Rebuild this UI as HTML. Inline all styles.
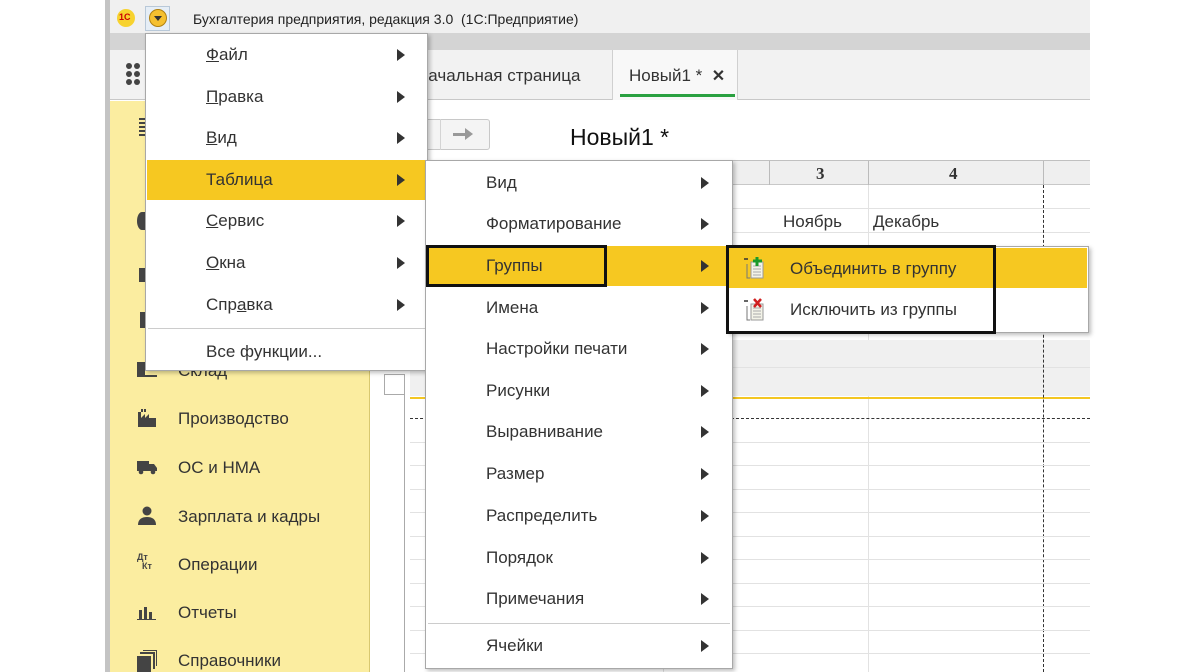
<!DOCTYPE html>
<html><head><meta charset="utf-8"><style>
*{margin:0;padding:0;box-sizing:border-box}
body{width:1200px;height:672px;overflow:hidden;background:#fff;position:relative;font-family:"Liberation Sans",Arial,sans-serif;color:#333}
.a{position:absolute}
.t{position:absolute;font-size:17px;white-space:nowrap;line-height:20px}
.arr{position:absolute;width:0;height:0;border-top:6px solid transparent;border-bottom:6px solid transparent;border-left:8px solid #333}
.hl{position:absolute;background:#f6c821}
.gl{position:absolute;background:#e2e2e2}
</style></head><body>
<!-- app frame -->
<div class="a" style="left:105px;top:0;width:5px;height:672px;background:#c4c4c4"></div>
<div class="a" style="left:110px;top:0;width:980px;height:33px;background:#f0f0f0"></div>
<div class="a" style="left:110px;top:33px;width:980px;height:17px;background:#d4d4d4"></div>
<div class="a" style="left:110px;top:50px;width:980px;height:50px;background:#f2f2f2;border-bottom:1px solid #c8c8c8"></div>
<!-- title bar -->
<div class="a" style="left:117px;top:9px;width:18px;height:18px;border-radius:50%;background:#f7d22e"></div>
<div class="a" style="left:119px;top:12px;font-size:9px;font-weight:bold;color:#c00">1С</div>
<div class="a" style="left:145px;top:6px;width:25px;height:25px;border:1px solid #b8c8d8;background:#e6eef6"></div>
<div class="a" style="left:149px;top:9px;width:18px;height:18px;border-radius:50%;background:#f5c030;border:1px solid #b08010"></div>
<div class="a" style="left:154px;top:16px;border-left:4px solid transparent;border-right:4px solid transparent;border-top:5px solid #333"></div>
<div class="t" style="left:193px;top:9px;font-size:14px;color:#222">Бухгалтерия предприятия, редакция 3.0&nbsp; (1С:Предприятие)</div>
<!-- grid icon -->
<svg class="a" style="left:125px;top:62px" width="22" height="24"><g fill="#444"><circle cx="4" cy="4" r="3"/><circle cx="12" cy="4" r="3"/><circle cx="4" cy="12" r="3"/><circle cx="12" cy="12" r="3"/><circle cx="4" cy="20" r="3"/><circle cx="12" cy="20" r="3"/></g></svg>
<!-- tabs -->
<div class="t" style="left:416px;top:66px;font-size:17px">Начальная страница</div>
<div class="a" style="left:612px;top:50px;width:126px;height:50px;background:#f8f8f8;border-left:1px solid #d0d0d0;border-right:1px solid #d0d0d0"></div>
<div class="t" style="left:629px;top:66px">Новый1 *&nbsp; <b style="font-size:16px">✕</b></div>
<div class="a" style="left:620px;top:94px;width:115px;height:3px;background:#2aa040"></div>
<!-- sidebar -->
<div class="a" style="left:110px;top:101px;width:260px;height:571px;background:#fbeda0;border-right:1px solid #d8c870"></div>
<div class="a" style="left:139px;top:118px;width:6px;height:18px;background:repeating-linear-gradient(#444 0 2px,transparent 2px 4px)"></div>
<div class="a" style="left:137px;top:212px;width:10px;height:18px;border-radius:50% 0 0 50%;background:#444"></div>
<div class="a" style="left:139px;top:268px;width:6px;height:14px;background:#444"></div>
<div class="a" style="left:140px;top:312px;width:6px;height:16px;background:#444"></div>
<div class="a" style="left:137px;top:362px;width:8px;height:14px;background:#444"></div>
<div class="a" style="left:137px;top:375px;width:20px;height:2px;background:#444"></div>
<svg class="a" style="left:137px;top:408px" width="20" height="20"><path d="M1 19V4h3v6l4-4v4l4-4v4h7v9z M4 1h2v3H4z M7 1h2v3H7z" fill="#444"/></svg>
<svg class="a" style="left:136px;top:458px" width="22" height="18"><path d="M1 3h12v10H1z M13 6h5l3 4v3h-8z" fill="#444"/><circle cx="5" cy="14" r="2.3" fill="#444"/><circle cx="17" cy="14" r="2.3" fill="#444"/></svg>
<svg class="a" style="left:138px;top:506px" width="18" height="20"><circle cx="9" cy="5" r="4.5" fill="#444"/><path d="M0 19c0-6 4-8 9-8s9 2 9 8z" fill="#444"/></svg>
<div class="a" style="left:137px;top:553px;font-size:9px;font-weight:bold;color:#444;line-height:9px">Дт<br>&nbsp;&nbsp;Кт</div>
<svg class="a" style="left:137px;top:604px" width="20" height="16"><path d="M2 6h3v9H2z M7 3h3v12H7z M12 8h3v7h-3z M0 15h19v1H0z" fill="#444"/></svg>
<svg class="a" style="left:137px;top:650px" width="20" height="22"><path d="M0 6h14v16H0z" fill="#444"/><path d="M3 3h14v16 M6 0h14v16" stroke="#444" stroke-width="2" fill="none"/></svg>
<div class="t" style="left:178px;top:409px">Производство</div>
<div class="t" style="left:178px;top:458px">ОС и НМА</div>
<div class="t" style="left:178px;top:507px">Зарплата и кадры</div>
<div class="t" style="left:178px;top:555px">Операции</div>
<div class="t" style="left:178px;top:603px">Отчеты</div>
<div class="t" style="left:178px;top:651px">Справочники</div>
<div class="t" style="left:178px;top:361px">Склад</div>
<!-- main content -->
<div class="a" style="left:420px;top:119px;width:70px;height:31px;border:1px solid #c8c8c8;border-radius:3px;background:#f4f4f4"></div>
<div class="a" style="left:440px;top:119px;width:1px;height:31px;background:#d4d4d4"></div>
<div class="a" style="left:453px;top:133px;width:14px;height:3px;background:#999"></div>
<div class="a" style="left:465px;top:128px;border-top:6px solid transparent;border-bottom:6px solid transparent;border-left:8px solid #999"></div>
<div class="t" style="left:570px;top:124px;font-size:23px;line-height:26px;color:#111">Новый1 *</div>
<!-- spreadsheet -->
<div class="a" style="left:410px;top:160px;width:680px;height:1px;background:#c0c0c0"></div>
<div class="a" style="left:410px;top:161px;width:680px;height:24px;background:#efefef;border-bottom:1px solid #c8c8c8"></div>
<div class="a" style="left:769px;top:161px;width:1px;height:24px;background:#bbb"></div>
<div class="a" style="left:868px;top:161px;width:1px;height:24px;background:#bbb"></div>
<div class="a" style="left:1043px;top:161px;width:1px;height:24px;background:#bbb"></div>
<div class="t" style="left:816px;top:164px;font-family:'Liberation Serif',serif;font-weight:bold;font-size:17px">3</div>
<div class="t" style="left:949px;top:164px;font-family:'Liberation Serif',serif;font-weight:bold;font-size:17px">4</div>
<div class="gl" style="left:868px;top:185px;width:1px;height:487px"></div>
<div class="gl" style="left:663px;top:185px;width:1px;height:487px"></div>
<div class="gl" style="left:410px;top:208px;width:680px;height:1px"></div>
<div class="gl" style="left:410px;top:232px;width:680px;height:1px"></div>
<div class="t" style="left:783px;top:212px">Ноябрь</div>
<div class="t" style="left:873px;top:212px">Декабрь</div>
<div class="a" style="left:410px;top:340px;width:680px;height:56px;background:#f0f0f0"></div>
<div class="gl" style="left:410px;top:367px;width:680px;height:1px"></div>
<div class="a" style="left:384px;top:374px;width:21px;height:21px;border:1px solid #aaa;border-right:none"></div>
<div class="a" style="left:404px;top:374px;width:1px;height:298px;background:#aaa"></div>
<div class="a" style="left:410px;top:397px;width:680px;height:2px;background:#f3c622"></div>
<div class="a" style="left:410px;top:418px;width:680px;height:0;border-top:1.5px dashed #333"></div>
<div class="a" style="left:1043px;top:185px;width:0;height:487px;border-left:1.5px dashed #333"></div>
<div class="gl" style="left:410px;top:442px;width:680px;height:1px"></div>
<div class="gl" style="left:410px;top:465px;width:680px;height:1px"></div>
<div class="gl" style="left:410px;top:489px;width:680px;height:1px"></div>
<div class="gl" style="left:410px;top:512px;width:680px;height:1px"></div>
<div class="gl" style="left:410px;top:536px;width:680px;height:1px"></div>
<div class="gl" style="left:410px;top:559px;width:680px;height:1px"></div>
<div class="gl" style="left:410px;top:583px;width:680px;height:1px"></div>
<div class="gl" style="left:410px;top:606px;width:680px;height:1px"></div>
<div class="gl" style="left:410px;top:630px;width:680px;height:1px"></div>
<div class="gl" style="left:410px;top:653px;width:680px;height:1px"></div>
<!-- menu 1 -->
<div class="a" style="left:145px;top:33px;width:283px;height:338px;background:#fff;border:1px solid #a8a8a8;box-shadow:2px 2px 4px rgba(0,0,0,.25)"></div>
<div class="hl" style="left:147px;top:160px;width:279px;height:40px"></div>
<div class="t" style="left:206px;top:45px"><u>Ф</u>айл</div>
<div class="t" style="left:206px;top:87px"><u>П</u>равка</div>
<div class="t" style="left:206px;top:128px"><u>В</u>ид</div>
<div class="t" style="left:206px;top:170px">Таблица</div>
<div class="t" style="left:206px;top:211px"><u>С</u>ервис</div>
<div class="t" style="left:206px;top:253px"><u>О</u>кна</div>
<div class="t" style="left:206px;top:295px">Спр<u>а</u>вка</div>
<div class="a" style="left:148px;top:328px;width:277px;height:1px;background:#ccc"></div>
<div class="t" style="left:206px;top:342px">Все функции...</div>
<div class="arr" style="left:397px;top:49px"></div>
<div class="arr" style="left:397px;top:91px"></div>
<div class="arr" style="left:397px;top:132px"></div>
<div class="arr" style="left:397px;top:174px"></div>
<div class="arr" style="left:397px;top:215px"></div>
<div class="arr" style="left:397px;top:257px"></div>
<div class="arr" style="left:397px;top:299px"></div>
<!-- menu 2 -->
<div class="a" style="left:425px;top:160px;width:308px;height:509px;background:#fff;border:1px solid #a8a8a8;box-shadow:2px 2px 4px rgba(0,0,0,.25)"></div>
<div class="hl" style="left:427px;top:246px;width:304px;height:40px"></div>
<div class="a" style="left:426px;top:245px;width:181px;height:42px;border:3px solid #111"></div>
<div class="t" style="left:486px;top:173px">Вид</div>
<div class="t" style="left:486px;top:214px">Форматирование</div>
<div class="t" style="left:486px;top:256px">Группы</div>
<div class="t" style="left:486px;top:298px">Имена</div>
<div class="t" style="left:486px;top:339px">Настройки печати</div>
<div class="t" style="left:486px;top:381px">Рисунки</div>
<div class="t" style="left:486px;top:422px">Выравнивание</div>
<div class="t" style="left:486px;top:464px">Размер</div>
<div class="t" style="left:486px;top:506px">Распределить</div>
<div class="t" style="left:486px;top:548px">Порядок</div>
<div class="t" style="left:486px;top:589px">Примечания</div>
<div class="a" style="left:428px;top:623px;width:302px;height:1px;background:#ccc"></div>
<div class="t" style="left:486px;top:636px">Ячейки</div>
<div class="arr" style="left:701px;top:177px"></div>
<div class="arr" style="left:701px;top:218px"></div>
<div class="arr" style="left:701px;top:260px"></div>
<div class="arr" style="left:701px;top:302px"></div>
<div class="arr" style="left:701px;top:343px"></div>
<div class="arr" style="left:701px;top:385px"></div>
<div class="arr" style="left:701px;top:426px"></div>
<div class="arr" style="left:701px;top:468px"></div>
<div class="arr" style="left:701px;top:510px"></div>
<div class="arr" style="left:701px;top:552px"></div>
<div class="arr" style="left:701px;top:593px"></div>
<div class="arr" style="left:701px;top:640px"></div>
<!-- menu 3 -->
<div class="a" style="left:727px;top:246px;width:362px;height:87px;background:#fff;border:1px solid #a8a8a8;box-shadow:2px 2px 4px rgba(0,0,0,.25)"></div>
<div class="hl" style="left:729px;top:248px;width:358px;height:40px"></div>
<div class="a" style="left:726px;top:245px;width:270px;height:89px;border:3px solid #111"></div>
<svg class="a" style="left:743px;top:256px" width="24" height="24"><path d="M1 3h4" stroke="#333" stroke-width="1.5"/><rect x="8" y="6" width="12" height="16" fill="#f3f3e8" stroke="#999"/><path d="M10 10h8M10 13h8M10 16h8M10 19h8" stroke="#aaa"/><path d="M4 8v14h3" stroke="#777" fill="none"/><path d="M14 1v9M10 5h9" stroke="#1a9a2a" stroke-width="3"/></svg>
<svg class="a" style="left:743px;top:298px" width="24" height="24"><path d="M1 3h4" stroke="#333" stroke-width="1.5"/><rect x="8" y="6" width="12" height="16" fill="#f3f3e8" stroke="#999"/><path d="M10 10h8M10 13h8M10 16h8M10 19h8" stroke="#aaa"/><path d="M4 8v14h3" stroke="#777" fill="none"/><path d="M11 1l7 8M18 1l-7 8" stroke="#d02020" stroke-width="2.5"/></svg>
<div class="t" style="left:790px;top:259px">Объединить в группу</div>
<div class="t" style="left:790px;top:300px">Исключить из группы</div>
</body></html>
